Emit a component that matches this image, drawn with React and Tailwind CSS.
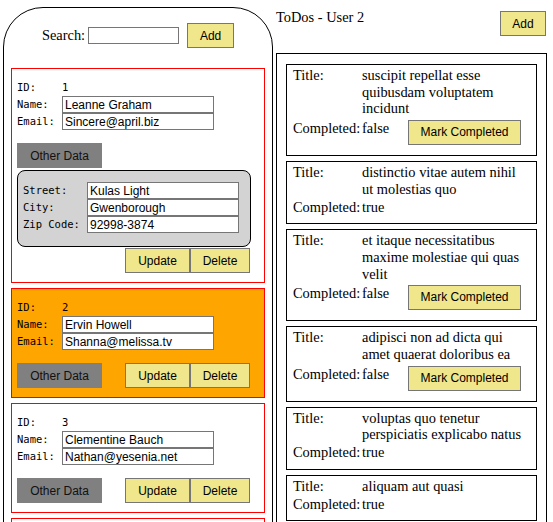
import React from 'react'

const SANS = "font-['Liberation_Sans',Arial,sans-serif] text-[12px]"
const MONO = "font-['DejaVu_Sans_Mono',monospace] text-[10.5px]"

const USERS = [
  { id:1, name:'Leanne Graham',    email:'Sincere@april.biz',  open:true, street:'Kulas Light', city:'Gwenborough', zip:'92998-3874' },
  { id:2, name:'Ervin Howell',     email:'Shanna@melissa.tv',  selected:true },
  { id:3, name:'Clementine Bauch', email:'Nathan@yesenia.net' },
]

const TODOS = [
  { title:'suscipit repellat esse quibusdam voluptatem incidunt', done:false },
  { title:'distinctio vitae autem nihil ut molestias quo',        done:true },
  { title:'et itaque necessitatibus maxime molestiae qui quas velit', done:false },
  { title:'adipisci non ad dicta qui amet quaerat doloribus ea',  done:false },
  { title:'voluptas quo tenetur perspiciatis explicabo natus',    done:true },
  { title:'aliquam aut quasi',                                    done:true },
]

function Btn({ className = '', children }) {
  return (
    <button className={`${SANS} h-[25px] border border-[#767676] bg-[#f0e68c] text-black ${className}`}>
      {children}
    </button>
  )
}

function Field({ value, className = '' }) {
  return (
    <input
      readOnly
      value={value}
      className={`${SANS} h-[17px] border border-[#767676] bg-white pl-[2px] text-black outline-none ${className}`}
    />
  )
}

function Row({ label, w, children }) {
  return (
    <div className="flex h-[17px] items-center">
      <span className={`${MONO} ${w} shrink-0`}>{label}</span>
      {children}
    </div>
  )
}

function UserCard({ u }) {
  const actions = (
    <div className="mr-[1px] flex">
      <Btn className="w-[65px]">Update</Btn>
      <Btn className="w-[60px]">Delete</Btn>
    </div>
  )
  return (
    <div className={`border border-[#ff0000] pl-[5px] pr-[13px] pt-[11px] pb-[9px] ${u.selected ? 'bg-[#ffa500]' : ''}`}>
      <div className={`${MONO} flex h-[16px] items-center`}>
        <span className="w-[45px] shrink-0">ID:</span>
        <span>{u.id}</span>
      </div>
      <Row label="Name:" w="w-[45px]"><Field value={u.name} className="w-[152px]" /></Row>
      <Row label="Email:" w="w-[45px]"><Field value={u.email} className="w-[152px]" /></Row>

      {u.open ? (
        <>
          <button className={`${SANS} mt-[13px] h-[25px] w-[85px] bg-[#808080] text-[#111]`}>Other Data</button>
          <div className="mt-[2px] rounded-[8px] border border-black bg-[#d3d3d3] pl-[5px] pt-[11px] pb-[13px]">
            <Row label="Street:" w="w-[64px]"><Field value={u.street} className="w-[152px]" /></Row>
            <Row label="City:" w="w-[64px]"><Field value={u.city} className="w-[152px]" /></Row>
            <Row label="Zip Code:" w="w-[64px]"><Field value={u.zip} className="w-[152px]" /></Row>
          </div>
          <div className="mt-[1px] flex justify-end">{actions}</div>
        </>
      ) : (
        <div className="mt-[13px] flex justify-between">
          <button className={`${SANS} h-[25px] w-[85px] bg-[#808080] text-[#111]`}>Other Data</button>
          {actions}
        </div>
      )}
    </div>
  )
}

function TodoItem({ t }) {
  return (
    <div className="border border-black pl-[6px] pt-[2px] pb-[8px] text-[14.4px] leading-[16.7px]">
      <div className="flex">
        <span className="w-[69px] shrink-0">Title:</span>
        <span className="w-[166px]">{t.title}</span>
      </div>
      {t.done ? (
        <div className="mt-[1px] flex">
          <span className="w-[69px] shrink-0">Completed:</span>
          <span>true</span>
        </div>
      ) : (
        <div className="mt-[1px] flex items-start pt-[2px]">
          <span className="w-[69px] shrink-0">Completed:</span>
          <span className="w-[46px] shrink-0">false</span>
          <Btn className="mb-[2px] w-[113px]">Mark Completed</Btn>
        </div>
      )}
    </div>
  )
}

export default function App() {
  return (
    <div className="flex h-[522px] w-[553px] overflow-hidden bg-white text-black font-['Liberation_Serif',serif]">
      {/* users */}
      <div className="ml-[3px] mt-[7px] w-[270px] shrink-0 self-start rounded-[40px] border border-black px-[7px] pt-[15px] pb-[20px]">
        <div className="flex h-[25px] items-center justify-center">
          <span className="mr-[3px] text-[14.4px]">Search:</span>
          <Field value="" className="w-[91px]" />
          <Btn className="ml-[8px] w-[47px]">Add</Btn>
        </div>
        <div className="mt-[20px] flex flex-col gap-[5px]">
          {USERS.map(u => <UserCard key={u.id} u={u} />)}
          {/* next card, only its top edge is in view */}
          <div className="h-[110px] border border-[#ff0000]" />
        </div>
      </div>

      {/* todos */}
      <div className="ml-[3px] w-[271px] shrink-0">
        <div className="flex h-[36px] items-start justify-between">
          <span className="mt-[9px] text-[14.4px] leading-[17px]">ToDos - User 2</span>
          <Btn className="mt-[11px] mr-[1px] h-[24px] w-[46px]">Add</Btn>
        </div>
        <div className="mt-[17px] flex flex-col gap-[5px] border border-black px-[9px] pt-[10px] pb-[10px]">
          {TODOS.map((t, i) => <TodoItem key={i} t={t} />)}
        </div>
      </div>
    </div>
  )
}
